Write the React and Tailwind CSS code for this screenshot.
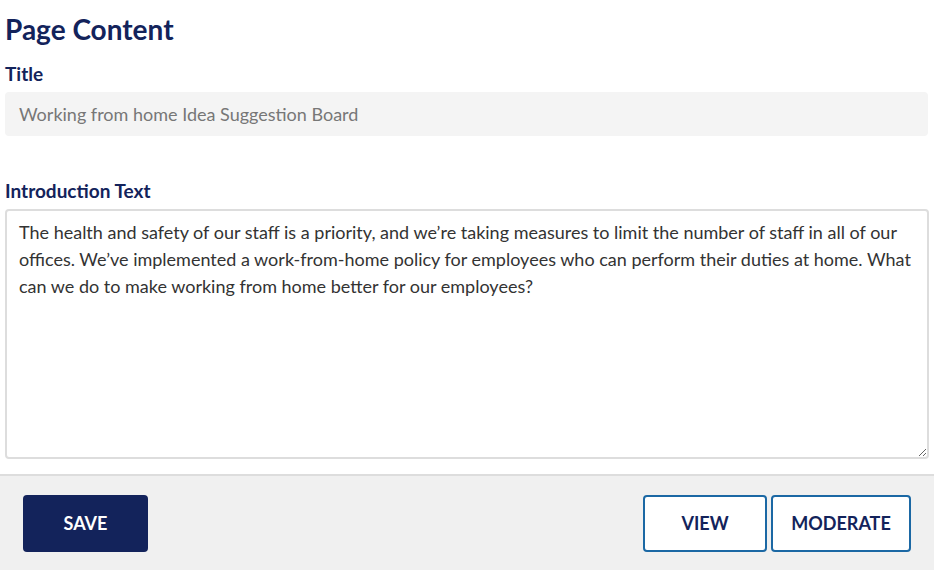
import React from 'react';

const navy = 'text-[#13235b]';

export default function App() {
    return (
        <div className="w-[934px] h-[570px] bg-white flex flex-col font-['Lato','Liberation_Sans',sans-serif] overflow-hidden">
            <div className="flex-1 px-[5px] pt-[11px]">
                <h1 className={`text-[28px] font-bold leading-[36px] ${navy}`}>Page Content</h1>

                <label className={`block mt-[16px] text-[19px] font-bold leading-[22px] ${navy}`}>Title</label>
                <div className="mt-[7px] h-[44px] w-[923px] bg-[#f4f4f4] rounded-[4px] flex items-center px-[14px] text-[18px] text-[#777]">
                    Working from home Idea Suggestion Board
                </div>

                <label className={`block mt-[44px] text-[19px] font-bold leading-[22px] ${navy}`}>Introduction Text</label>
                <textarea
                    className="mt-[7px] block w-[924px] h-[250px] border-2 border-[#ddd] rounded-[4px] px-[12px] pt-[8px] text-[18px] leading-[27px] text-[#333] outline-none"
                    defaultValue="The health and safety of our staff is a priority, and we’re taking measures to limit the number of staff in all of our offices. We’ve implemented a work-from-home policy for employees who can perform their duties at home. What can we do to make working from home better for our employees?"
                />
            </div>

            <div className="h-[96px] bg-[#f0f0f0] border-t-2 border-[#ddd] flex items-center justify-between pl-[23px] pr-[23px]">
                <button className="w-[125px] h-[57px] bg-[#13235b] rounded-[4px] text-white font-bold text-[18px]">SAVE</button>
                <div className="flex gap-[4px]">
                    <button className={`w-[124px] h-[57px] bg-white border-2 border-[#1b68a4] rounded-[4px] font-bold text-[18px] ${navy}`}>VIEW</button>
                    <button className={`w-[140px] h-[57px] bg-white border-2 border-[#1b68a4] rounded-[4px] font-bold text-[18px] ${navy}`}>MODERATE</button>
                </div>
            </div>
        </div>
    );
}
